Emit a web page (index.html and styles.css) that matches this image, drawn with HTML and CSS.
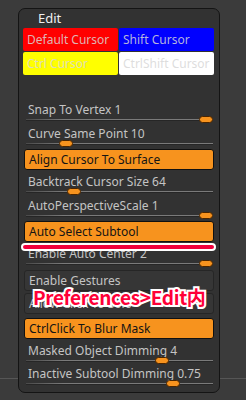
FILE: index.html
```html
<!DOCTYPE html>
<html lang="ja">
<head>
  <meta charset="UTF-8">
  <meta name="viewport" content="width=device-width, initial-scale=1.0">
  <title>Edit Preferences</title>
  <link rel="stylesheet" href="styles.css">
</head>
<body>
  <div class="panel">
    <div class="panel-title">Edit</div>

    <!-- cursor colours -->
    <div class="cursor-grid">
      <div class="swatch swatch-red">Default Cursor</div>
      <div class="swatch swatch-blue">Shift Cursor</div>
      <div class="swatch swatch-yellow">Ctrl Cursor</div>
      <div class="swatch swatch-white">CtrlShift Cursor</div>
    </div>

    <div class="slider first">
      <div class="slider-label">Snap To Vertex 1</div>
      <div class="slider-track"><span class="knob" style="left: 173px"></span></div>
    </div>
    <div class="slider">
      <div class="slider-label">Curve Same Point 10</div>
      <div class="slider-track"><span class="knob" style="left: 33px"></span></div>
    </div>

    <div class="toggle on">Align Cursor To Surface</div>

    <div class="slider">
      <div class="slider-label">Backtrack Cursor Size 64</div>
      <div class="slider-track"><span class="knob" style="left: 41px"></span></div>
    </div>
    <div class="slider">
      <div class="slider-label">AutoPerspectiveScale 1</div>
      <div class="slider-track"><span class="knob" style="left: 173px"></span></div>
    </div>

    <div class="toggle on">Auto Select Subtool</div>

    <div class="slider">
      <div class="slider-label">Enable Auto Center 2</div>
      <div class="slider-track"><span class="knob" style="left: 173px"></span></div>
    </div>

    <div class="toggle">Enable Gestures</div>
    <div class="toggle tight">Allow Click To Solo</div>
    <div class="toggle on">CtrlClick To Blur Mask</div>

    <div class="slider">
      <div class="slider-label">Masked Object Dimming 4</div>
      <div class="slider-track"><span class="knob" style="left: 129px"></span></div>
    </div>
    <div class="slider">
      <div class="slider-label">Inactive Subtool Dimming 0.75</div>
      <div class="slider-track"><span class="knob" style="left: 140px"></span></div>
    </div>

    <!-- annotation -->
    <div class="mark-line"></div>
    <div class="mark-text">Preferences&gt;Edit内</div>
  </div>
</body>
</html>
```
FILE: styles.css
```css
body {
  margin: 0;
  height: 400px;
  overflow: hidden;
  font-family: "Noto Sans", "Open Sans", sans-serif;
  background: linear-gradient(#565656, #565656) 0 378px / 100% 1px no-repeat, #3b3b3b;
}

/* panel */
.panel {
  position: relative;
  box-sizing: border-box;
  width: 202px;
  height: 385px;
  margin: 8px 0 0 18px;
  padding: 0 5px;
  background-color: #323232;
  border: 1px solid #141414;
  border-radius: 7px;
}

.panel-title {
  height: 19px;
  padding-left: 14px;
  font-size: 13px;
  line-height: 19px;
  color: #f0f0f0;
}

/* cursor colours */
.cursor-grid {
  display: grid;
  grid-template-columns: 95px 95px;
  gap: 1px;
  margin-left: -1px;
}

.swatch {
  height: 23px;
  padding-left: 4px;
  border-radius: 2px;
  font-size: 12px;
  line-height: 23px;
  color: rgba(215, 215, 215, 0.85);
  white-space: nowrap;
}

.swatch-red { background-color: #ff0000; }
.swatch-blue { background-color: #0000ff; }
.swatch-yellow { background-color: #ffff00; }
.swatch-white { background-color: #ffffff; }

/* sliders */
.slider {
  height: 23.5px;
}

.slider.first {
  margin-top: 23px;
}

.slider-label {
  padding: 4px 0 0 4px;
  height: 16px;
  font-size: 12px;
  line-height: 16px;
  color: #c4c4c4;
  white-space: nowrap;
}

.slider-track {
  position: relative;
  height: 1px;
  margin: 1px 1px 0 2px;
  background: linear-gradient(to right, #4a4a4a, #7a7a7a 20%, #7a7a7a);
  box-shadow: 0 1px 0 #262626;
}

.knob {
  position: absolute;
  top: -3px;
  width: 12px;
  height: 5px;
  background-color: #f7931e;
  border: 1px solid #4a2500;
  border-radius: 4px;
}

/* toggles */
.toggle {
  box-sizing: border-box;
  height: 21px;
  margin-top: 4px;
  padding-left: 4px;
  border: 1px solid #262626;
  border-radius: 3px;
  background-color: #363636;
  font-size: 12px;
  line-height: 19px;
  color: #c4c4c4;
}

.toggle.tight {
  margin-top: 2px;
}

.toggle.on {
  background-color: #f7931e;
  border-color: #111;
  color: #141414;
}

/* annotation drawn over the panel */
.mark-line {
  position: absolute;
  left: 2px;
  top: 234px;
  width: 191px;
  height: 4px;
  background-color: #f0003c;
  border: 2px solid #fff;
  border-radius: 5px;
}

.mark-text {
  position: absolute;
  left: 14px;
  top: 276px;
  font-family: "Noto Sans CJK JP", "Noto Sans", sans-serif;
  font-size: 19px;
  font-weight: bold;
  line-height: 24px;
  letter-spacing: -0.35px;
  color: #ff0038;
  -webkit-text-stroke: 4px #fff;
  paint-order: stroke fill;
  white-space: nowrap;
}
```
